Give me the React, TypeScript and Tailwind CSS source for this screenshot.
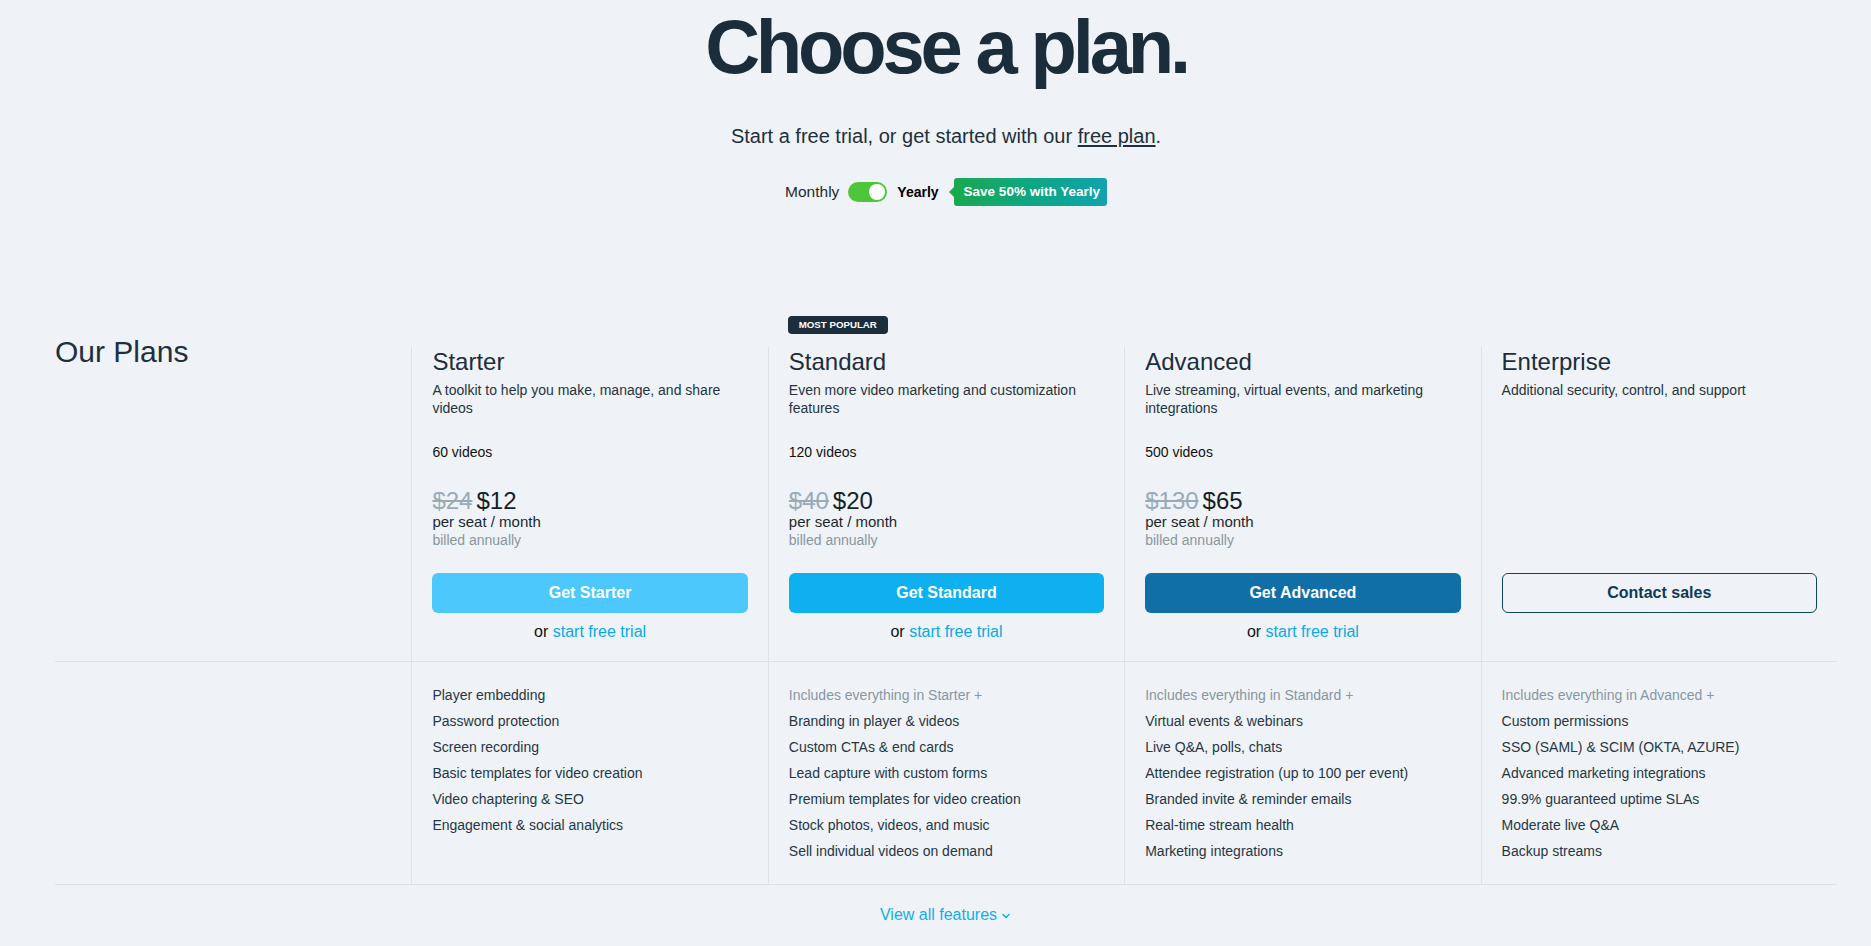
import { ChevronDown } from "lucide-react";

type Plan = {
  name: string;
  blurb: string;
  videos?: string;
  was?: string;
  now?: string;
  cta: string;
  btn: string;
  trial: boolean;
  popular?: boolean;
  includes?: string;
  features: string[];
};

const plans: Plan[] = [
  {
    name: "Starter",
    blurb: "A toolkit to help you make, manage, and share videos",
    videos: "60 videos",
    was: "$24",
    now: "$12",
    cta: "Get Starter",
    btn: "bg-[#4cc8fc] text-white",
    trial: true,
    features: [
      "Player embedding",
      "Password protection",
      "Screen recording",
      "Basic templates for video creation",
      "Video chaptering & SEO",
      "Engagement & social analytics",
    ],
  },
  {
    name: "Standard",
    blurb: "Even more video marketing and customization features",
    videos: "120 videos",
    was: "$40",
    now: "$20",
    cta: "Get Standard",
    btn: "bg-[#0fb0ef] text-white",
    trial: true,
    popular: true,
    includes: "Includes everything in Starter +",
    features: [
      "Branding in player & videos",
      "Custom CTAs & end cards",
      "Lead capture with custom forms",
      "Premium templates for video creation",
      "Stock photos, videos, and music",
      "Sell individual videos on demand",
    ],
  },
  {
    name: "Advanced",
    blurb: "Live streaming, virtual events, and marketing integrations",
    videos: "500 videos",
    was: "$130",
    now: "$65",
    cta: "Get Advanced",
    btn: "bg-[#116fa8] text-white",
    trial: true,
    includes: "Includes everything in Standard +",
    features: [
      "Virtual events & webinars",
      "Live Q&A, polls, chats",
      "Attendee registration (up to 100 per event)",
      "Branded invite & reminder emails",
      "Real-time stream health",
      "Marketing integrations",
    ],
  },
  {
    name: "Enterprise",
    blurb: "Additional security, control, and support",
    cta: "Contact sales",
    btn: "border border-[#0d4668] text-[#0c3a57]",
    trial: false,
    includes: "Includes everything in Advanced +",
    features: [
      "Custom permissions",
      "SSO (SAML) & SCIM (OKTA, AZURE)",
      "Advanced marketing integrations",
      "99.9% guaranteed uptime SLAs",
      "Moderate live Q&A",
      "Backup streams",
    ],
  },
];

function PlanHead({ plan }: { plan: Plan }) {
  return (
    <div className="relative flex flex-col border-l border-[#dce2e8] px-5 pb-[19px]">
      {plan.popular && (
        <span className="absolute -top-[31px] left-[19px] flex h-[18px] w-[100px] items-center justify-center rounded-[4px] bg-[#1c2d3c] text-[9.7px] font-bold text-white">
          MOST POPULAR
        </span>
      )}
      <h3 className="text-[24px] leading-[30px] text-[#1c2d3b]">{plan.name}</h3>
      <p className="mt-1 h-[36px] text-[14px] leading-[18px] text-[#25333f]">{plan.blurb}</p>
      {plan.videos && (
        <>
          <p className="mt-[26px] text-[14px] leading-[18px] text-[#111]">{plan.videos}</p>
          <div className="mt-[28px] text-[24px] leading-[24px] text-[#161f27]">
            <span className="mr-1 text-[#9aabb8] line-through">{plan.was}</span>
            {plan.now}
          </div>
          <p className="text-[15px] leading-[17px] text-[#1c2730]">per seat / month</p>
          <p className="mt-[1px] text-[14px] leading-[18px] text-[#8a96a0]">billed annually</p>
        </>
      )}
      <div className="mt-auto pt-[24px]">
        <button className={`h-10 w-full rounded-md text-[16px] font-bold ${plan.btn}`}>
          {plan.cta}
        </button>
        <p
          className={`mt-[9px] text-center text-[16px] leading-[20px] text-[#111] ${
            plan.trial ? "" : "invisible"
          }`}
        >
          or <span className="text-[#0aa9e6]">start free trial</span>
        </p>
      </div>
    </div>
  );
}

function PlanFeatures({ plan }: { plan: Plan }) {
  return (
    <ul className="border-l border-[#dce2e8] px-5 pt-5 pb-5 text-[14px] leading-[26px] text-[#263644]">
      {plan.includes && <li className="text-[#8796a3]">{plan.includes}</li>}
      {plan.features.map((f) => (
        <li key={f}>{f}</li>
      ))}
    </ul>
  );
}

export default function App() {
  return (
    <div
      className="min-h-screen bg-[#eff3f7] text-[#1b2d3b]"
      style={{ fontFamily: '"Liberation Sans", Arial, sans-serif' }}
    >
      <div className="ml-[55px] w-[1782px] pt-[9px]">
        <h1 className="text-center text-[76px] font-bold leading-none tracking-[-4.2px] text-[#1b2d3b]">
          Choose a plan.
        </h1>
        <p className="mt-[37px] text-center text-[20px] leading-[28px] text-[#1f2f3d]">
          Start a free trial, or get started with our{" "}
          <a className="underline underline-offset-2">free plan</a>.
        </p>

        {/* billing toggle */}
        <div className="mt-[28px] flex h-[28px] items-center justify-center">
          <span className="text-[15.5px] text-[#1c2a36]">Monthly</span>
          <span className="ml-[9px] flex h-[20px] w-[39px] items-center justify-end rounded-full bg-[#4dc63b] px-[2px]">
            <span className="h-[16px] w-[16px] rounded-full bg-white" />
          </span>
          <span className="ml-[10px] text-[14px] font-bold text-black">Yearly</span>
          <span className="ml-[10px] flex items-center">
            <span className="h-0 w-0 border-y-[5px] border-r-[5px] border-y-transparent border-r-[#1ca84e]" />
            <span className="flex h-[28px] items-center rounded-[3px] bg-gradient-to-r from-[#1aa84d] to-[#12a2ae] pr-[7px] pl-[10px] text-[13.5px] font-bold text-white">
              Save 50% with Yearly
            </span>
          </span>
        </div>

        {/* plan heads */}
        <div className="mt-[141px] grid grid-cols-5 border-b border-[#dce2e8]">
          <h2 className="-mt-[13px] text-[30px] leading-[36px] text-[#1e3040]">Our Plans</h2>
          {plans.map((p) => (
            <PlanHead key={p.name} plan={p} />
          ))}
        </div>

        {/* features */}
        <div className="grid grid-cols-5 border-b border-[#dce2e8]">
          <div />
          {plans.map((p) => (
            <PlanFeatures key={p.name} plan={p} />
          ))}
        </div>

        <div className="mt-[20px] flex items-center justify-center text-[16px] leading-[20px] text-[#12aeea]">
          View all features
          <ChevronDown className="ml-[3px] mt-[2px] h-[12px] w-[12px]" strokeWidth={3} />
        </div>
      </div>
    </div>
  );
}
